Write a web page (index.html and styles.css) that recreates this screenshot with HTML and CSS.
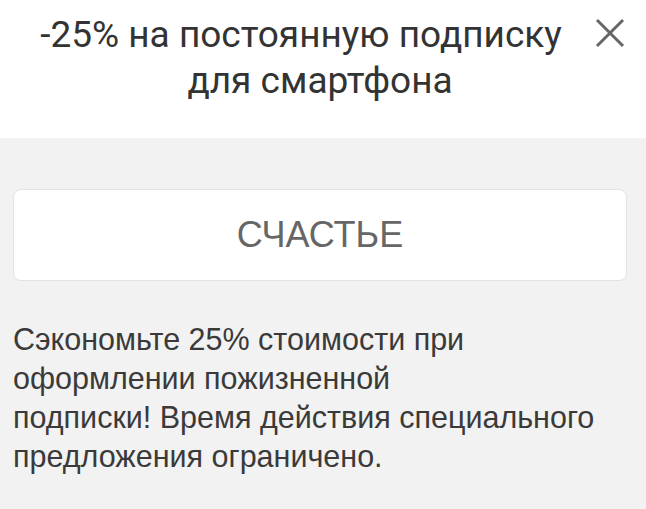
FILE: index.html
```html
<!DOCTYPE html>
<html lang="ru">
<head>
<meta charset="utf-8">
<link rel="stylesheet" href="styles.css">
</head>
<body>
<div class="header">
  <h1 class="title"><span class="l1">-25% на постоянную подписку</span><span class="l2">для смартфона</span></h1>
  <button class="close" aria-label="Закрыть">
    <svg width="30" height="30" viewBox="0 0 30 30"><path d="M2 2 L28 28 M28 2 L2 28" stroke="#666" stroke-width="3" fill="none"/></svg>
  </button>
</div>
<div class="content">
  <div class="code">СЧАСТЬЕ</div>
  <p class="desc">Сэкономьте 25% стоимости при<br>оформлении пожизненной<br>подписки! Время действия специального<br>предложения ограничено.</p>
</div>
</body>
</html>
```
FILE: styles.css
```css
html, body { margin: 0; padding: 0; }
body { width: 646px; height: 509px; background: #f2f2f2; overflow: hidden; }
.header {
  position: relative;
  background: #fff;
  height: 138px;
  box-sizing: border-box;
  padding-top: 12px;
}
.title {
  margin: 0;
  text-align: center;
  font-family: Roboto, sans-serif;
  font-weight: 400;
  font-size: 37px;
  line-height: 46px;
  color: #333;
}
.title .l1 { display: block; padding-right: 44px; }
.title .l2 { display: block; padding-right: 6px; }
.close {
  position: absolute;
  top: 18px;
  right: 21px;
  background: none;
  border: 0;
  padding: 0;
  width: 30px;
  height: 30px;
}
.close svg { display: block; }
.content { padding: 51px 19px 0 13px; }
.code {
  height: 90px;
  background: #fff;
  border: 1px solid #e2e2e2;
  border-radius: 8px;
  display: flex;
  align-items: center;
  justify-content: center;
  font-family: "Liberation Sans", Arial, sans-serif;
  font-size: 36px;
  color: #666;
}
.desc {
  margin: 39px 0 0 0;
  font-family: "Liberation Sans", Arial, sans-serif;
  font-size: 30.5px;
  line-height: 39px;
  color: #3a3a3a;
}
```
